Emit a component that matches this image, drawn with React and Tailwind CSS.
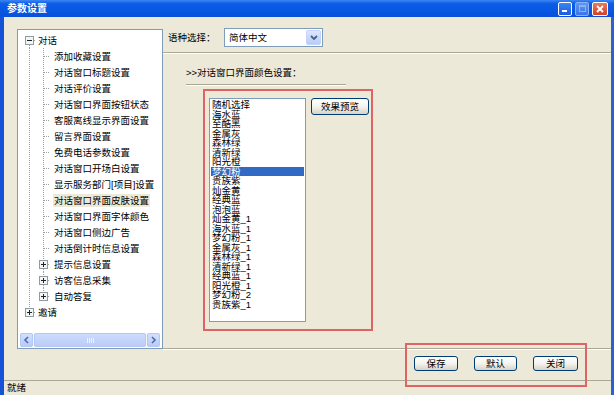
import React from 'react';

const treeRows = [
	{ g: [{ down: 1, right: 1, box: 'minus' }], text: '对话', ml: 'ml-[1px]' },
	{ g: [{ up: 1, down: 1 }, { up: 1, down: 1, right: 1 }], text: '添加收藏设置' },
	{ g: [{ up: 1, down: 1 }, { up: 1, down: 1, right: 1 }], text: '对话窗口标题设置' },
	{ g: [{ up: 1, down: 1 }, { up: 1, down: 1, right: 1 }], text: '对话评价设置' },
	{ g: [{ up: 1, down: 1 }, { up: 1, down: 1, right: 1 }], text: '对话窗口界面按钮状态' },
	{ g: [{ up: 1, down: 1 }, { up: 1, down: 1, right: 1 }], text: '客服离线显示界面设置' },
	{ g: [{ up: 1, down: 1 }, { up: 1, down: 1, right: 1 }], text: '留言界面设置' },
	{ g: [{ up: 1, down: 1 }, { up: 1, down: 1, right: 1 }], text: '免费电话参数设置' },
	{ g: [{ up: 1, down: 1 }, { up: 1, down: 1, right: 1 }], text: '对话窗口开场白设置' },
	{ g: [{ up: 1, down: 1 }, { up: 1, down: 1, right: 1 }], text: '显示服务部门[项目]设置' },
	{ g: [{ up: 1, down: 1 }, { up: 1, down: 1, right: 1 }], text: '对话窗口界面皮肤设置', selected: true },
	{ g: [{ up: 1, down: 1 }, { up: 1, down: 1, right: 1 }], text: '对话窗口界面字体颜色' },
	{ g: [{ up: 1, down: 1 }, { up: 1, down: 1, right: 1 }], text: '对话窗口侧边广告' },
	{ g: [{ up: 1, down: 1 }, { up: 1, down: 1, right: 1 }], text: '对话倒计时信息设置' },
	{ g: [{ up: 1, down: 1 }, { up: 1, down: 1, right: 1, box: 'plus' }], text: '提示信息设置' },
	{ g: [{ up: 1, down: 1 }, { up: 1, down: 1, right: 1, box: 'plus' }], text: '访客信息采集' },
	{ g: [{ up: 1, down: 1 }, { up: 1, right: 1, box: 'plus' }], text: '自动答复' },
	{ g: [{ up: 1, right: 1, box: 'plus' }], text: '邀请', ml: 'ml-[1px]' },
];

const skins = [
	'随机选择', '海水蓝', '至酷黑', '金属灰', '森林绿', '清新绿', '阳光橙', '梦幻粉', '贵族紫', '灿金黄', '经典蓝',
	'泡泡蓝', '灿金黄_1', '海水蓝_1', '梦幻粉_1', '金属灰_1', '森林绿_1', '清新绿_1', '经典蓝_1', '阳光橙_1',
	'梦幻粉_2', '贵族紫_1',
];

// dotted tree connector cell, 14x16
const Guide = ({ up, down, right, box }) => {
	const dot = { stroke: '#A0A0A0', strokeDasharray: '1 1', shapeRendering: 'crispEdges' };
	return (
		<svg width="14" height="16" className="block shrink-0">
			{up && <line x1="7.5" y1="0" x2="7.5" y2={box ? 4 : 9} {...dot} />}
			{down && <line x1="7.5" y1={box ? 13 : 8} x2="7.5" y2="16" {...dot} />}
			{right && <line x1={box ? 12 : 8} y1="8.5" x2="14" y2="8.5" {...dot} />}
			{box && (
				<g shapeRendering="crispEdges">
					<rect x="3.5" y="4.5" width="8" height="8" fill="#F4F4F0" stroke="#8C9AAA" />
					<line x1="5" y1="8.5" x2="10" y2="8.5" stroke="#222" />
					{box === 'plus' && <line x1="7.5" y1="6" x2="7.5" y2="11" stroke="#222" />}
				</g>
			)}
		</svg>
	);
};

const XpButton = ({ children, className = '' }) => (
	<div className={`flex items-center justify-center rounded-[3px] border border-[#003C74] bg-linear-to-b from-white via-[#F4F3EE] to-[#D8D3C8] text-[9.5px] leading-[10px] text-black ${className}`}>
		{children}
	</div>
);

const Etched = ({ className = '' }) => (
	<div className={`h-[2px] border-t border-t-[#ACA899] border-b border-b-white ${className}`} />
);

const ScrollArrow = ({ dir }) => (
	<div className="w-[13px] h-full rounded-[2px] border border-[#B4C8F6] bg-linear-to-b from-[#D3E0FD] to-[#B7CCF9] flex items-center justify-center">
		<svg width="7" height="8" viewBox="0 0 7 8">
			<path d={dir === 'left' ? 'M5 1 L2 4 L5 7' : 'M2 1 L5 4 L2 7'} fill="none" stroke="#4D6AAE" strokeWidth="1.6" />
		</svg>
	</div>
);

export default function App() {
	return (
		<div className="relative w-[614px] h-[395px] flex flex-col overflow-hidden bg-[#ECE9D8] text-black font-['Liberation_Sans','Noto_Sans_CJK_SC',sans-serif]">
			{/* Title bar */}
			<div className="h-[17px] shrink-0 flex items-center pl-[7px] pr-[6px] bg-[linear-gradient(180deg,#3c86f4_0%,#0c5ce6_22%,#0656e2_70%,#0a4fd6_100%)]">
				<span className="text-white font-bold text-[10px] leading-[11px]">参数设置</span>
				<div className="ml-auto flex items-center gap-[3px]">
					<div className="w-[14px] h-[14px] rounded-[2px] border border-white bg-linear-to-b from-[#3D85F5] to-[#1C5BDF] flex items-end pl-[3px] pb-[3px]">
						<div className="w-[5px] h-[2px] bg-white" />
					</div>
					<div className="w-[14px] h-[14px] rounded-[2px] border border-[#8FB1F2] bg-linear-to-b from-[#5D96F4] to-[#3B74E6] flex items-center justify-center">
						<div className="w-[7px] h-[7px] border border-[#8FB1F2] border-t-2" />
					</div>
					<div className="w-[16px] h-[14px] rounded-[2px] border border-white bg-linear-to-b from-[#E8795A] to-[#D2411F] flex items-center justify-center">
						<svg width="8" height="8" viewBox="0 0 8 8">
							<path d="M1 1 L7 7 M7 1 L1 7" stroke="white" strokeWidth="1.8" />
						</svg>
					</div>
				</div>
			</div>

			<div className="flex-1 flex border-l-4 border-l-[#1452D8] border-r-[3px] border-r-[#2A60D6]">
				<div className="flex-1 flex flex-col">
					<div className="flex-1 flex">
						{/* Tree */}
						<div className="pl-[13px] pt-[12px]">
							<div className="w-[146px] h-[320px] border border-[#7F9DB9] bg-white flex flex-col">
								<div className="pt-[2px] pl-[4px]">
									{treeRows.map((row) => (
										<div key={row.text} className="h-[16px] flex items-center">
											{row.g.map((g, i) => (
												<Guide key={i} {...g} />
											))}
											<span
												className={`${row.ml || 'ml-[3px]'} px-[1px] text-[9.5px] leading-[13px] whitespace-nowrap ${row.selected ? 'bg-[#ECE9D8]' : ''}`}
											>
												{row.text}
											</span>
										</div>
									))}
								</div>
								<div className="mt-auto mb-[1px] mx-[2px] h-[14px] flex bg-[#F5F4EF]">
									<ScrollArrow dir="left" />
									<div className="flex-1 mx-[1px] rounded-[2px] border border-[#B4C8F6] bg-linear-to-b from-[#CCDAFD] to-[#BACDF8] flex items-center justify-center gap-[1px]">
										<div className="w-[1px] h-[5px] bg-[#EEF3FE]" />
										<div className="w-[1px] h-[5px] bg-[#EEF3FE]" />
										<div className="w-[1px] h-[5px] bg-[#EEF3FE]" />
										<div className="w-[1px] h-[5px] bg-[#EEF3FE]" />
									</div>
									<ScrollArrow dir="right" />
								</div>
							</div>
						</div>

						{/* Right panel */}
						<div className="flex-1 flex flex-col">
							<div className="pt-[11px] pl-[5px] flex items-center">
								<span className="text-[9.5px] leading-[12px] w-[56px]">语种选择：</span>
								<div className="w-[99px] h-[19px] border border-[#7F9DB9] bg-white flex items-center p-[1px]">
									<span className="pl-[3px] text-[9.5px] leading-[12px]">简体中文</span>
									<div className="ml-auto w-[15px] h-full rounded-[2px] border border-[#C3D3FD] bg-linear-to-b from-[#DCE6FE] to-[#B7CCF9] flex items-center justify-center">
										<svg width="8" height="6" viewBox="0 0 8 6">
											<path d="M1 1 L4 4 L7 1" fill="none" stroke="#4D6185" strokeWidth="1.8" />
										</svg>
									</div>
								</div>
							</div>
							<Etched className="mt-[5px]" />

							<div className="ml-[23px] w-[160px] mt-[13px]">
								<div className="text-[9.5px] leading-[12px] whitespace-nowrap">&gt;&gt;对话窗口界面颜色设置：</div>
								<Etched className="mt-[5px]" />
							</div>

							<div className="ml-[40px] mt-[3px] w-[170px] h-[242px] border-2 border-[#E06464] flex items-start pl-[4px] pt-[7px]">
								<div className="w-[97px] h-[224px] border border-[#7F9DB9] bg-white pt-[1px] px-[1px]">
									{skins.map((s) => (
										<div
											key={s}
											className={`h-[9.5px] pl-[1px] text-[9.5px] leading-[9.5px] whitespace-nowrap ${s === '梦幻粉' ? 'bg-[#316AC5] text-white' : ''}`}
										>
											{s}
										</div>
									))}
								</div>
								<XpButton className="ml-[5px] w-[58px] h-[17px]">效果预览</XpButton>
							</div>

							<div className="mt-auto">
								<Etched />
								<div className="h-[30px] flex justify-end items-start pt-[6px] pr-[33px] gap-[16px]">
									<XpButton className="w-[44px] h-[15px]">保存</XpButton>
									<XpButton className="w-[43px] h-[15px]">默认</XpButton>
									<XpButton className="w-[45px] h-[15px]">关闭</XpButton>
								</div>
							</div>
						</div>
					</div>

					{/* Status bar */}
					<div className="h-[15px] shrink-0 border-t border-t-[#ACA899] flex items-center pl-[3px]">
						<span className="text-[9.5px] leading-[12px]">就绪</span>
					</div>
				</div>
			</div>

			{/* red annotation round the buttons */}
			<div className="absolute left-[405px] top-[343px] w-[182px] h-[44px] border-2 border-[#E06464]" />
		</div>
	);
}
